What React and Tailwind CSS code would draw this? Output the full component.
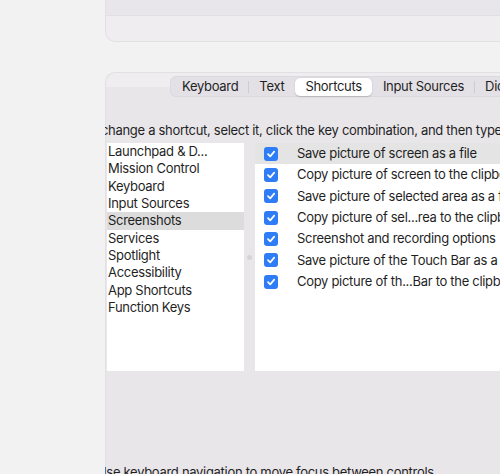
import { useState } from 'react';

const tabs = ["Keyboard", "Text", "Shortcuts", "Input Sources", "Dictation"];

const categories = [
  "Launchpad & D...",
  "Mission Control",
  "Keyboard",
  "Input Sources",
  "Screenshots",
  "Services",
  "Spotlight",
  "Accessibility",
  "App Shortcuts",
  "Function Keys",
];

const shortcuts = [
  "Save picture of screen as a file",
  "Copy picture of screen to the clipboard",
  "Save picture of selected area as a file",
  "Copy picture of sel...rea to the clipboard",
  "Screenshot and recording options",
  "Save picture of the Touch Bar as a file",
  "Copy picture of th...Bar to the clipboard",
];

function Checkbox() {
  return (
    <span className="flex h-[14px] w-[14px] shrink-0 items-center justify-center rounded-[3px] bg-[#2f7df6]">
      <svg width="10" height="10" viewBox="0 0 10 10" fill="none">
        <path d="M2 5.2 L4.2 7.4 L8.2 2.6" stroke="white" strokeWidth="1.7" strokeLinecap="round" strokeLinejoin="round" />
      </svg>
    </span>
  );
}

export default function App() {
  const [activeTab, setActiveTab] = useState("Shortcuts");
  const [activeCategory, setActiveCategory] = useState("Screenshots");
  const [selectedRow, setSelectedRow] = useState(0);

  return (
    <div className="flex h-[474px] w-[500px] overflow-hidden bg-[#f2f2f2] text-[13px] tracking-[-0.3px] text-[#1f1f1f] [font-family:Inter,'Noto_Sans',sans-serif]">
      {/* left gutter */}
      <div className="w-[105px] shrink-0" />

      <div className="flex min-w-0 flex-1 flex-col overflow-hidden">
        {/* previous section card */}
        <div className="flex w-[600px] shrink-0 flex-col overflow-hidden rounded-bl-[10px] border-b border-l border-[#e3e0e4] bg-[#f0edf1]">
          <div className="h-[16px] border-b border-[#e2dfe3] bg-[#e9e6eb]" />
          <div className="h-[25px]" />
        </div>

        {/* keyboard settings panel */}
        <div className="mt-[30px] flex w-[600px] flex-1 flex-col rounded-tl-[10px] border-l border-t border-[#e3e0e4] bg-[#e9e6ea]">
          <div className="relative h-[14px] shrink-0 rounded-tl-[10px] bg-[#f0edf1]">
            {/* segmented tabs */}
            <div className="absolute left-[64px] top-[3px] flex h-[21px] items-center rounded-[6px] border border-[#dcd9dd] bg-[#e4e1e6] px-[1px]">
              {tabs.map((tab, i) => {
                const active = tab === activeTab;
                const prevActive = i > 0 && tabs[i - 1] === activeTab;
                return (
                  <div key={tab} className="flex items-center">
                    {i > 0 && (
                      <span className={`h-[12px] w-px ${active || prevActive ? "bg-transparent" : "bg-[#cfccd0]"}`} />
                    )}
                    <button
                      onClick={() => setActiveTab(tab)}
                      className={`flex h-[18px] items-center rounded-[5px] px-[10px] leading-none ${active ? "bg-white shadow-[0_0.5px_1.5px_rgba(0,0,0,0.18)]" : ""}`}
                    >
                      {tab}
                    </button>
                  </div>
                );
              })}
            </div>
          </div>

          <div className="flex flex-col pl-px">
            <p className="-ml-[24px] mt-[35px] whitespace-nowrap leading-[16px]">
              To change a shortcut, select it, click the key combination, and then type the new keys.
            </p>

            <div className="mt-[5px] flex h-[228px] shrink-0">
              {/* categories */}
              <div className="flex w-[137px] shrink-0 flex-col bg-white">
                {categories.map((cat) => (
                  <button
                    key={cat}
                    onClick={() => setActiveCategory(cat)}
                    className={`flex h-[17.33px] items-center whitespace-nowrap pl-px text-left leading-none ${cat === activeCategory ? "bg-[#dcdcdc]" : ""}`}
                  >
                    {cat}
                  </button>
                ))}
              </div>

              {/* split handle */}
              <div className="flex w-[11px] shrink-0 items-center justify-center">
                <span className="mt-[1px] h-[5px] w-[5px] rounded-full bg-[#d6d3d7]" />
              </div>

              {/* shortcut list */}
              <div className="flex flex-1 flex-col bg-white">
                {shortcuts.map((s, i) => (
                  <button
                    key={s}
                    onClick={() => setSelectedRow(i)}
                    className={`flex h-[21.33px] items-center whitespace-nowrap pl-[9px] text-left leading-none ${i === selectedRow ? "bg-[#e4e4e4]" : ""}`}
                  >
                    <Checkbox />
                    <span className="ml-[19px]">{s}</span>
                  </button>
                ))}
              </div>
            </div>

            <p className="-ml-[10px] mt-[93px] whitespace-nowrap leading-[16px]">
              Use keyboard navigation to move focus between controls
            </p>
          </div>
        </div>
      </div>
    </div>
  );
}
